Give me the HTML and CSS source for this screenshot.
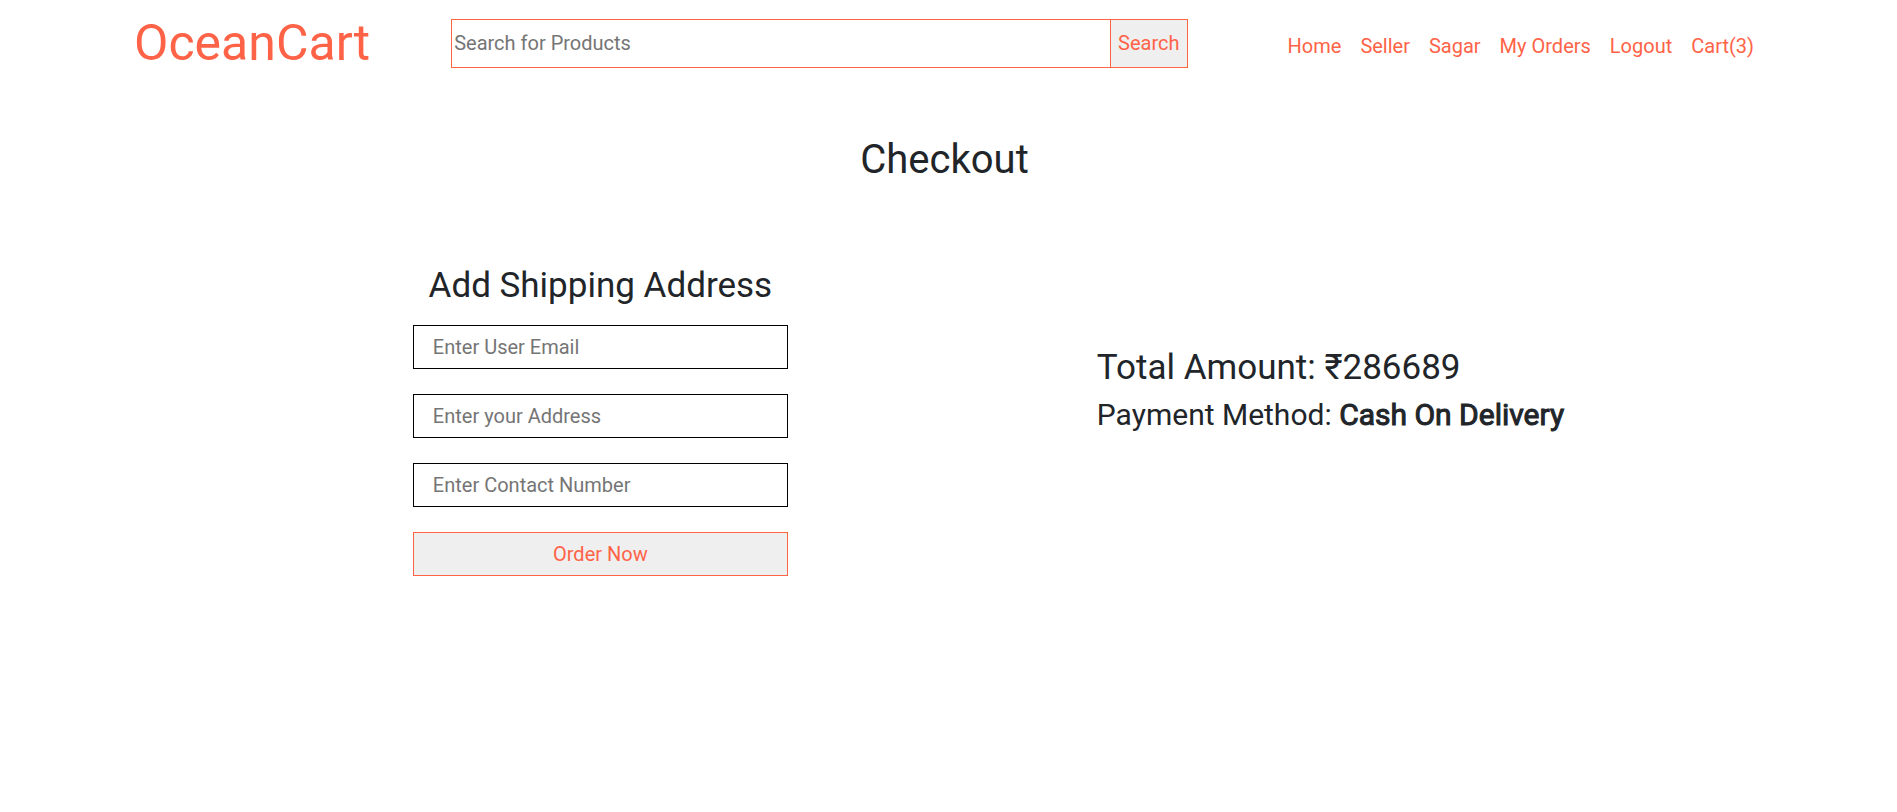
FILE: index.html
```html
<!DOCTYPE html>
<html lang="en">
<head>
<meta charset="utf-8">
<title>OceanCart</title>
<link rel="stylesheet" href="styles.css">
</head>
<body>
<header class="header">
  <a class="logo" href="#">OceanCart</a>
  <form class="search">
    <input class="search-input" type="text" placeholder="Search for Products" aria-label="Search for Products">
    <button class="search-button" type="button">Search</button>
  </form>
  <nav class="nav">
    <a href="#">Home</a>
    <a href="#">Seller</a>
    <a href="#">Sagar</a>
    <a href="#">My Orders</a>
    <a href="#">Logout</a>
    <a href="#">Cart(3)</a>
  </nav>
</header>
<main>
  <h1 class="title">Checkout</h1>
  <div class="checkout">
    <form class="address">
      <h2 class="address-title">Add Shipping Address</h2>
      <input class="field" type="email" placeholder="Enter User Email" aria-label="Enter User Email">
      <input class="field" type="text" placeholder="Enter your Address" aria-label="Enter your Address">
      <input class="field" type="text" placeholder="Enter Contact Number" aria-label="Enter Contact Number">
      <button class="order" type="button">Order Now</button>
    </form>
    <section class="summary">
      <h2 class="total">Total Amount: ₹286689</h2>
      <h3 class="payment">Payment Method: <b class="method">Cash On Delivery</b></h3>
    </section>
  </div>
</main>
</body>
</html>
```
FILE: styles.css
```css
* { box-sizing: border-box; }
body { margin: 0; padding-right: 8px; background: #fff; color: #212529; font: 20px/30px Roboto, sans-serif; }
h1, h2, h3 { margin: 0; font-weight: 400; }
a { color: tomato; text-decoration: none; }
input, button { font: inherit; border-radius: 0; }
.header { display: flex; align-items: center; padding: 8px 135px 0 134px; }
.logo { font-size: 50px; line-height: 71px; }
.search { display: flex; flex: 1; height: 49px; margin: 0 100px 0 81px; }
.search-input { flex: 1; min-width: 0; padding: 0 2px 2px; border: 1px solid tomato; border-right: 0; background: #fff; }
.search-button { padding: 0 7px 2px; border: 1px solid tomato; color: tomato; background: #efefef; }
.nav { display: flex; gap: 19px; padding-top: 5px; }
.title { margin-top: 57px; text-align: center; font-size: 40px; line-height: 48px; }
.checkout { display: flex; justify-content: center; align-items: center; gap: 309px; margin-top: 81px; padding-left: 88px; }
.address { display: flex; flex-direction: column; width: 375px; gap: 25px; }
.address-title { margin-bottom: -7px; text-align: center; font-size: 35px; line-height: 42px; }
.field { height: 44px; padding: 1px 19px; border: 1px solid #000; background: #fff; }
.order { height: 44px; border: 1px solid tomato; color: tomato; background: #efefef; }
.summary { padding-bottom: 61px; }
.total { margin-bottom: 8px; font-size: 35px; line-height: 42px; }
.payment { font-size: 30px; line-height: 36px; }
.method { font-weight: 400; -webkit-text-stroke: 1px #212529; }
```
